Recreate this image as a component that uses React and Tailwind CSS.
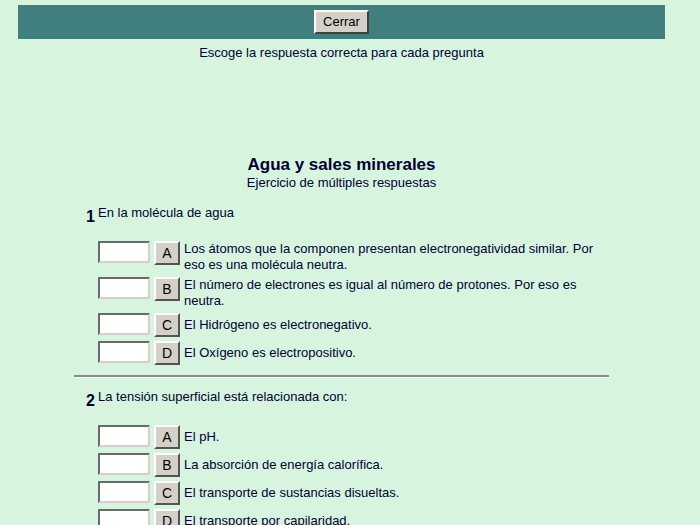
import React from 'react';

const questions = [
  {
    n: '1',
    text: 'En la molécula de agua',
    options: [
      'Los átomos que la componen presentan electronegatividad similar. Por eso es una molécula neutra.',
      'El número de electrones es igual al número de protones. Por eso es neutra.',
      'El Hidrógeno es electronegativo.',
      'El Oxígeno es electropositivo.',
    ],
  },
  {
    n: '2',
    text: 'La tensión superficial está relacionada con:',
    options: [
      'El pH.',
      'La absorción de energía calorífica.',
      'El transporte de sustancias disueltas.',
      'El transporte por capilaridad.',
    ],
  },
];

const letters = ['A', 'B', 'C', 'D'];

function Option({ letter, text }) {
  return (
    <div className="flex items-start py-[2px]">
      <input
        type="text"
        className="h-[22px] w-[52px] shrink-0 bg-white border-2 border-t-[#6a6a6a] border-l-[#6a6a6a] border-b-[#d4d0c8] border-r-[#d4d0c8] outline-none"
      />
      <button className="ml-[4px] h-[24px] w-[26px] shrink-0 bg-[#d4d0c8] text-[14px] leading-none text-black border-2 border-t-white border-l-white border-b-[#555] border-r-[#555]">
        {letter}
      </button>
      <div className="ml-[4px] self-center pr-[8px] text-[13px] leading-[16px]">{text}</div>
    </div>
  );
}

function Question({ q, last }) {
  return (
    <div>
      <div className="flex items-start pl-[12px] pt-[2px] mb-[14px]">
        <span className="mt-[4px] w-[12px] text-[16px] font-bold leading-[16px]">{q.n}</span>
        <span className="text-[13px] leading-[16px]">{q.text}</span>
      </div>
      <div className="pl-[24px]">
        {q.options.map((o, i) => (
          <Option key={i} letter={letters[i]} text={o} />
        ))}
      </div>
      {!last && (
        <div className="mt-[8px] mb-[9px] border-t-2 border-t-[#8a8a8a] border-b border-b-[#f4fff6]" />
      )}
    </div>
  );
}

export default function App() {
  return (
    <div
      className="min-h-screen bg-[#d7f5de] text-[#000033]"
      style={{ fontFamily: '"Liberation Sans", Arial, sans-serif' }}
    >
      <div className="w-[683px] pt-[5px] pb-10">
        <div className="ml-[18px] w-[647px] h-[34px] bg-[#417f7f] flex items-center justify-center">
          <button className="h-[24px] px-[7px] bg-[#d4d0c8] text-[13px] text-black border-2 border-t-white border-l-white border-b-[#404040] border-r-[#404040]">
            Cerrar
          </button>
        </div>
        <p className="mt-[6px] text-center text-[13px] leading-[16px]">
          Escoge la respuesta correcta para cada pregunta
        </p>

        <div className="mx-auto mt-[94px] w-[535px]">
          <h1 className="text-center text-[17px] font-bold leading-[20px]">Agua y sales minerales</h1>
          <p className="text-center text-[13px] leading-[16px]">Ejercicio de múltiples respuestas</p>
          <div className="mt-[12px]">
            {questions.map((q, i) => (
              <Question key={q.n} q={q} last={i === questions.length - 1} />
            ))}
          </div>
        </div>
      </div>
    </div>
  );
}
